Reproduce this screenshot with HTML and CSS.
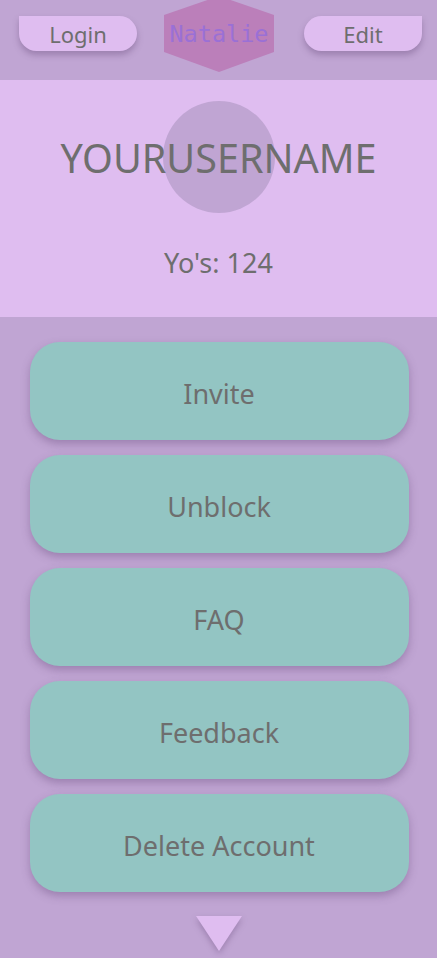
FILE: index.html
```html
<!DOCTYPE html>
<html lang="en">
<head>
    <meta charset="UTF-8">
    <meta name="viewport" content="width=device-width, initial-scale=1.0">
    <title>Profile</title>
    <link rel="stylesheet" href="styles.css">
</head>
<body>
    <div class="top-bar">
        <button class="pill pill-left">Login</button>
        <div class="hex">
            <svg width="112" height="75" viewBox="0 0 112 75">
                <polygon points="56,-4 111,15 111,52 56,72 1,52 1,15" fill="#bb7fba"/>
            </svg>
            <span class="hex-name">Natalie</span>
        </div>
        <button class="pill pill-right">Edit</button>
    </div>

    <div class="profile">
        <div class="avatar"></div>
        <h1 class="username">YOURUSERNAME</h1>
        <p class="yos">Yo's: 124</p>
    </div>

    <div class="menu">
        <button class="menu-btn">Invite</button>
        <button class="menu-btn">Unblock</button>
        <button class="menu-btn">FAQ</button>
        <button class="menu-btn">Feedback</button>
        <button class="menu-btn">Delete Account</button>
        <div class="arrow">
            <svg width="48" height="38" viewBox="0 0 48 38">
                <polygon points="1,1 47,1 24,36" fill="#dfbdf0"/>
            </svg>
        </div>
    </div>
</body>
</html>
```

FILE: styles.css
```css
body {
    font-family: "Noto Sans", "Open Sans", sans-serif;
    background-color: #c0a5d3;
    margin: 0;
    padding: 0;
    color: #6e6e6e;
    width: 437px;
    height: 958px;
    overflow: hidden;
}
button {
    font-family: inherit;
    color: #6e6e6e;
    border: none;
    cursor: pointer;
}
.top-bar {
    height: 80px;
    display: flex;
    justify-content: space-between;
    align-items: flex-start;
    padding: 0 15px 0 19px;
    box-sizing: border-box;
}
.pill {
    margin-top: 16px;
    width: 118px;
    height: 35px;
    background-color: #dfbdf0;
    font-size: 22px;
    padding: 0;
    box-shadow: 0 4px 6px rgba(90, 60, 110, 0.35);
}
.pill-left {
    border-radius: 0 18px 18px 18px;
}
.pill-right {
    border-radius: 18px 0 18px 18px;
}
.hex {
    position: relative;
    width: 112px;
    height: 75px;
    margin-left: -3px;
}
.hex svg {
    display: block;
}
.hex-name {
    position: absolute;
    top: 20px;
    left: 0;
    right: 0;
    text-align: center;
    font-family: "DejaVu Sans Mono", "Liberation Mono", monospace;
    font-size: 23.5px;
    color: #9a70d6;
}
.profile {
    position: relative;
    height: 237px;
    background-color: #dfbdf0;
    text-align: center;
    overflow: hidden;
}
.avatar {
    position: absolute;
    top: 21px;
    left: 163px;
    width: 112px;
    height: 112px;
    border-radius: 50%;
    background-color: #c0a5d3;
}
.username {
    position: relative;
    margin: 0;
    padding-top: 52px;
    font-size: 39.5px;
    font-weight: normal;
    line-height: 52px;
}
.yos {
    position: relative;
    margin: 61px 0 0;
    font-size: 27px;
    line-height: 36px;
}
.menu {
    display: flex;
    flex-direction: column;
    align-items: center;
    gap: 15px;
    padding: 25px 0 0 1px;
}
.menu-btn {
    width: 379px;
    height: 98px;
    padding-top: 5px;
    background-color: #93c5c3;
    border-radius: 30px;
    font-size: 27px;
    box-shadow: 0 4px 8px rgba(90, 60, 110, 0.35);
}
.arrow {
    margin-top: 8px;
}
.arrow svg {
    display: block;
    filter: drop-shadow(0 3px 3px rgba(90, 60, 110, 0.35));
}
```
